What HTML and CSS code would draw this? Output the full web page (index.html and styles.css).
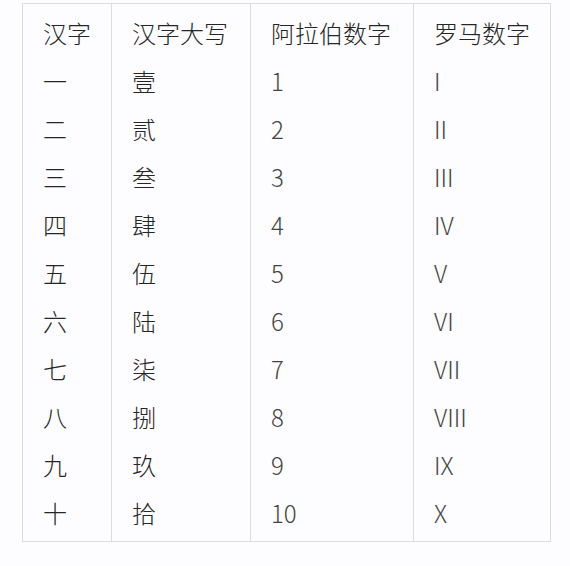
FILE: index.html
```html
<!DOCTYPE html>
<html lang="zh-CN">
<head>
<meta charset="utf-8">
<link rel="stylesheet" href="styles.css">
</head>
<body>
<div class="page">
<table class="num-table">
  <colgroup>
    <col class="c1"><col class="c2"><col class="c3"><col class="c4">
  </colgroup>
  <thead>
    <tr><th>汉字</th><th>汉字大写</th><th>阿拉伯数字</th><th>罗马数字</th></tr>
  </thead>
  <tbody>
    <tr><td>一</td><td>壹</td><td class="num">1</td><td class="num">I</td></tr>
    <tr><td>二</td><td>贰</td><td class="num">2</td><td class="num">II</td></tr>
    <tr><td>三</td><td>叁</td><td class="num">3</td><td class="num">III</td></tr>
    <tr><td>四</td><td>肆</td><td class="num">4</td><td class="num">IV</td></tr>
    <tr><td>五</td><td>伍</td><td class="num">5</td><td class="num">V</td></tr>
    <tr><td>六</td><td>陆</td><td class="num">6</td><td class="num">VI</td></tr>
    <tr><td>七</td><td>柒</td><td class="num">7</td><td class="num">VII</td></tr>
    <tr><td>八</td><td>捌</td><td class="num">8</td><td class="num">VIII</td></tr>
    <tr><td>九</td><td>玖</td><td class="num">9</td><td class="num">IX</td></tr>
    <tr class="last"><td>十</td><td>拾</td><td class="num">10</td><td class="num">X</td></tr>
  </tbody>
</table>
</div>
</body>
</html>
```
FILE: styles.css
```css
html, body {
  margin: 0;
  padding: 0;
  background: #fdfcfe;
}
.page {
  padding: 3px 0 0 22px;
}
.num-table {
  border-collapse: collapse;
  table-layout: fixed;
  width: 528px;
  font-family: "Noto Sans CJK SC", "Noto Sans", sans-serif;
  font-size: 24px;
  font-weight: 300;
  color: #262626;
}
.num-table .c1 { width: 89px; }
.num-table .c2 { width: 139px; }
.num-table .c3 { width: 163px; }
.num-table .c4 { width: 137px; }
.num-table th,
.num-table td {
  text-align: left;
  font-weight: 300;
  padding: 0 0 0 20px;
  height: 48px;
  line-height: 48px;
  border-left: 1px solid #dcdcdf;
  border-right: 1px solid #dcdcdf;
  vertical-align: middle;
  white-space: nowrap;
}
.num-table thead tr {
  border-top: 1px solid #dcdcdf;
}
.num-table th {
  padding-top: 5px;
}
.num-table tr.last {
  border-bottom: 1px solid #dcdcdf;
}
.num-table tr.last td {
  padding-bottom: 4px;
}
.num-table td.num {
  font-weight: 300;
  color: #444;
}
```
